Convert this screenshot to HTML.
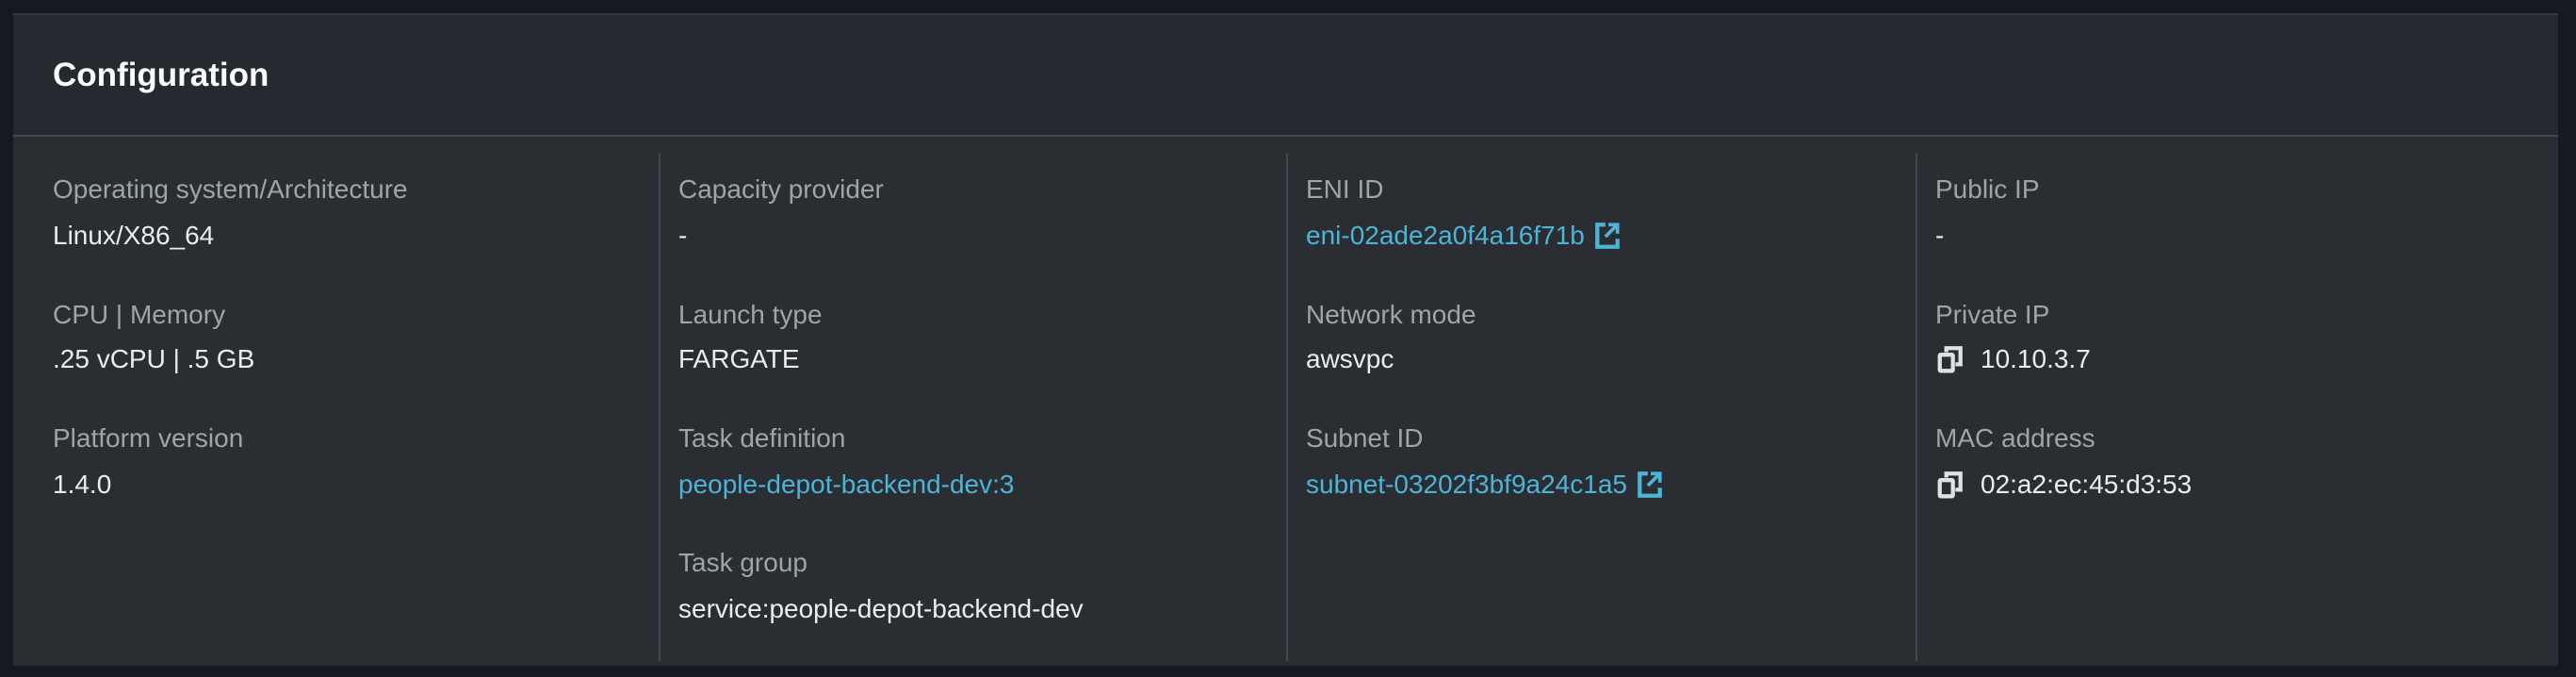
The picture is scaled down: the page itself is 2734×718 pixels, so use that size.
<!DOCTYPE html>
<html><head><meta charset="utf-8"><style>
*{margin:0;padding:0;box-sizing:border-box}
body{width:2734px;height:718px;background:#16191f;font-family:"Liberation Sans",sans-serif;position:relative;overflow:hidden}
.card{position:absolute;left:14px;top:14px;width:2701px;height:692px;background:#2a2e33;border-top:2px solid #353a41}
.hdr{position:absolute;left:0;top:0;width:100%;height:129px;background:#252930;border-bottom:2px solid #414750}
.title{position:absolute;left:42px;top:44px;font-size:35px;font-weight:bold;color:#fafafa}
.div{position:absolute;top:146px;height:539px;width:2px;background:#414750}
.l{position:absolute;font-size:28px;color:#9ba7a6;white-space:nowrap}
.v{position:absolute;font-size:28px;color:#eaeded;white-space:nowrap;display:flex;align-items:center;gap:10px}
.a{color:#4cb4d6}
svg{display:block}
</style></head><body>
<div class="card">
<div class="hdr"><div class="title">Configuration</div></div>
<div class="div" style="left:685px"></div>
<div class="div" style="left:1351px"></div>
<div class="div" style="left:2019px"></div>
</div>
<div class="l" style="left:56px;top:185px">Operating system/Architecture</div>
<div class="v" style="left:56px;top:234px">Linux/X86_64</div>
<div class="l" style="left:56px;top:318px">CPU | Memory</div>
<div class="v" style="left:56px;top:365px">.25 vCPU | .5 GB</div>
<div class="l" style="left:56px;top:449px">Platform version</div>
<div class="v" style="left:56px;top:498px">1.4.0</div>

<div class="l" style="left:720px;top:185px">Capacity provider</div>
<div class="v" style="left:720px;top:234px">-</div>
<div class="l" style="left:720px;top:318px">Launch type</div>
<div class="v" style="left:720px;top:365px">FARGATE</div>
<div class="l" style="left:720px;top:449px">Task definition</div>
<div class="v a" style="left:720px;top:498px">people-depot-backend-dev:3</div>
<div class="l" style="left:720px;top:581px">Task group</div>
<div class="v" style="left:720px;top:630px">service:people-depot-backend-dev</div>

<div class="l" style="left:1386px;top:185px">ENI ID</div>
<div class="v a" style="left:1386px;top:234px">eni-02ade2a0f4a16f71b<svg width="28" height="30" viewBox="0 0 26 28"><path d="M11 3H3v22h20v-8" fill="none" stroke="#4cb4d6" stroke-width="4"/><path d="M14 3h9v9M23 3L11 15" fill="none" stroke="#4cb4d6" stroke-width="3.5"/></svg></div>
<div class="l" style="left:1386px;top:318px">Network mode</div>
<div class="v" style="left:1386px;top:365px">awsvpc</div>
<div class="l" style="left:1386px;top:449px">Subnet ID</div>
<div class="v a" style="left:1386px;top:498px">subnet-03202f3bf9a24c1a5<svg width="28" height="30" viewBox="0 0 26 28"><path d="M11 3H3v22h20v-8" fill="none" stroke="#4cb4d6" stroke-width="4"/><path d="M14 3h9v9M23 3L11 15" fill="none" stroke="#4cb4d6" stroke-width="3.5"/></svg></div>

<div class="l" style="left:2054px;top:185px">Public IP</div>
<div class="v" style="left:2054px;top:234px">-</div>
<div class="l" style="left:2054px;top:318px">Private IP</div>
<div class="v" style="left:2056px;top:365px;gap:18px"><svg width="28" height="30" viewBox="0 0 26 28"><rect x="2.5" y="9.5" width="13" height="16" fill="none" stroke="#dfe1e3" stroke-width="4" rx="1"/><path d="M9 7V3h14v16h-5" fill="none" stroke="#dfe1e3" stroke-width="4"/></svg>10.10.3.7</div>
<div class="l" style="left:2054px;top:449px">MAC address</div>
<div class="v" style="left:2056px;top:498px;gap:18px"><svg width="28" height="30" viewBox="0 0 26 28"><rect x="2.5" y="9.5" width="13" height="16" fill="none" stroke="#dfe1e3" stroke-width="4" rx="1"/><path d="M9 7V3h14v16h-5" fill="none" stroke="#dfe1e3" stroke-width="4"/></svg>02:a2:ec:45:d3:53</div>
</body></html>
